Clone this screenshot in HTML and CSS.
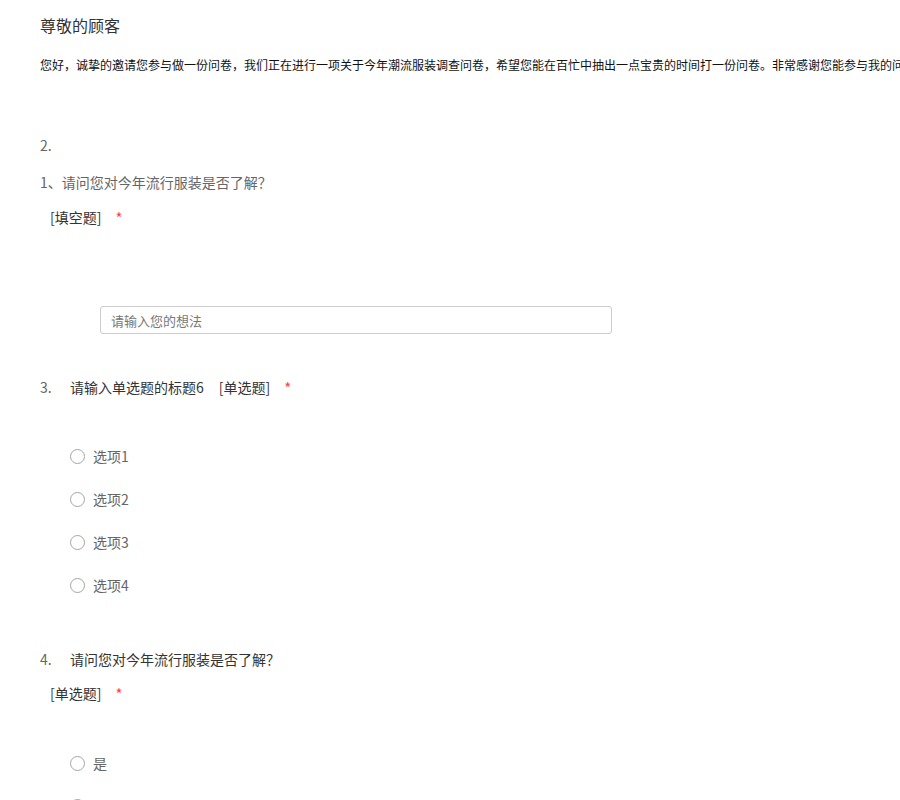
FILE: index.html
```html
<!DOCTYPE html>
<html lang="zh-CN">
<head>
<meta charset="utf-8">
<title>问卷</title>
<link rel="stylesheet" href="styles.css">
</head>
<body>
<div class="page">
  <header class="intro">
    <h1 class="title">尊敬的顾客</h1>
    <p class="desc">您好，诚挚的邀请您参与做一份问卷，我们正在进行一项关于今年潮流服装调查问卷，希望您能在百忙中抽出一点宝贵的时间打一份问卷。非常感谢您能参与我的问卷调查，祝您生活愉快！</p>
  </header>

  <section class="q q-fill">
    <div class="num">2.</div>
    <div class="fill-title">1、请问您对今年流行服装是否了解？</div>
    <div class="tag-line"><span class="tag">[填空题]</span><span class="req">*</span></div>
    <input class="answer" type="text" placeholder="请输入您的想法">
  </section>

  <section class="q q-radio">
    <div class="q-head"><span class="num">3.</span><span class="q-title">请输入单选题的标题6</span><span class="tag">[单选题]</span><span class="req">*</span></div>
    <ul class="options">
      <li class="option"><span class="radio"></span><span class="opt-label">选项1</span></li>
      <li class="option"><span class="radio"></span><span class="opt-label">选项2</span></li>
      <li class="option"><span class="radio"></span><span class="opt-label">选项3</span></li>
      <li class="option"><span class="radio"></span><span class="opt-label">选项4</span></li>
    </ul>
  </section>

  <section class="q q-radio2">
    <div class="q-head"><span class="num">4.</span><span class="q-title">请问您对今年流行服装是否了解？</span></div>
    <div class="tag-line tag-line2"><span class="tag">[单选题]</span><span class="req">*</span></div>
    <ul class="options options2">
      <li class="option"><span class="radio"></span><span class="opt-label">是</span></li>
      <li class="option"><span class="radio"></span><span class="opt-label">否</span></li>
    </ul>
  </section>
</div>
</body>
</html>
```

FILE: styles.css
```css
html, body {
  margin: 0;
  padding: 0;
  background: #fff;
}
body {
  font-family: "Noto Sans CJK SC", "Microsoft YaHei", "Liberation Sans", sans-serif;
  color: #333;
  overflow: hidden;
}
.page {
  padding: 15px 0 0 40px;
  width: 860px;
  overflow: hidden;
}
.title {
  margin: 0;
  font-size: 16px;
  line-height: 20px;
  font-weight: normal;
  color: #333;
}
.desc {
  margin: 20px 0 0;
  font-size: 12px;
  line-height: 20px;
  color: #111;
  white-space: nowrap;
}
.q {
  font-size: 14px;
  line-height: 20px;
}
.q-fill {
  margin-top: 60px;
}
.num {
  color: #666;
}
.fill-title {
  margin-top: 17px;
  color: #666;
}
.tag-line {
  margin-top: 15px;
  padding-left: 10px;
  display: flex;
  align-items: center;
}
.tag {
  color: #333;
}
.req {
  color: #f44;
  font-size: 15px;
  margin-left: 14px;
  position: relative;
  top: 1px;
}
.answer {
  display: block;
  box-sizing: border-box;
  margin: 79px 0 0 60px;
  width: 512px;
  height: 28px;
  border: 1px solid #ccc;
  border-radius: 3px;
  padding: 0 10px;
  font-family: inherit;
  font-size: 13px;
  color: #333;
  outline: none;
}
.answer::placeholder {
  color: #777;
}
.q-radio {
  margin-top: 43px;
}
.q-head {
  display: flex;
  align-items: center;
}
.q-head .num {
  width: 30px;
}
.q-title {
  color: #333;
}
.q-head .tag {
  margin-left: 15px;
}
.options {
  list-style: none;
  margin: 49px 0 0;
  padding: 0 0 0 30px;
  display: flex;
  flex-direction: column;
  gap: 23px;
}
.option {
  display: flex;
  align-items: center;
  height: 20px;
}
.radio {
  box-sizing: border-box;
  width: 15px;
  height: 15px;
  border: 1px solid #a5a5a5;
  border-radius: 50%;
  background: #fff;
}
.opt-label {
  margin-left: 8px;
  color: #666;
}
.q-radio2 {
  margin-top: 54px;
}
.tag-line2 {
  margin-top: 14px;
}
.options2 {
  margin-top: 50px;
}
```
